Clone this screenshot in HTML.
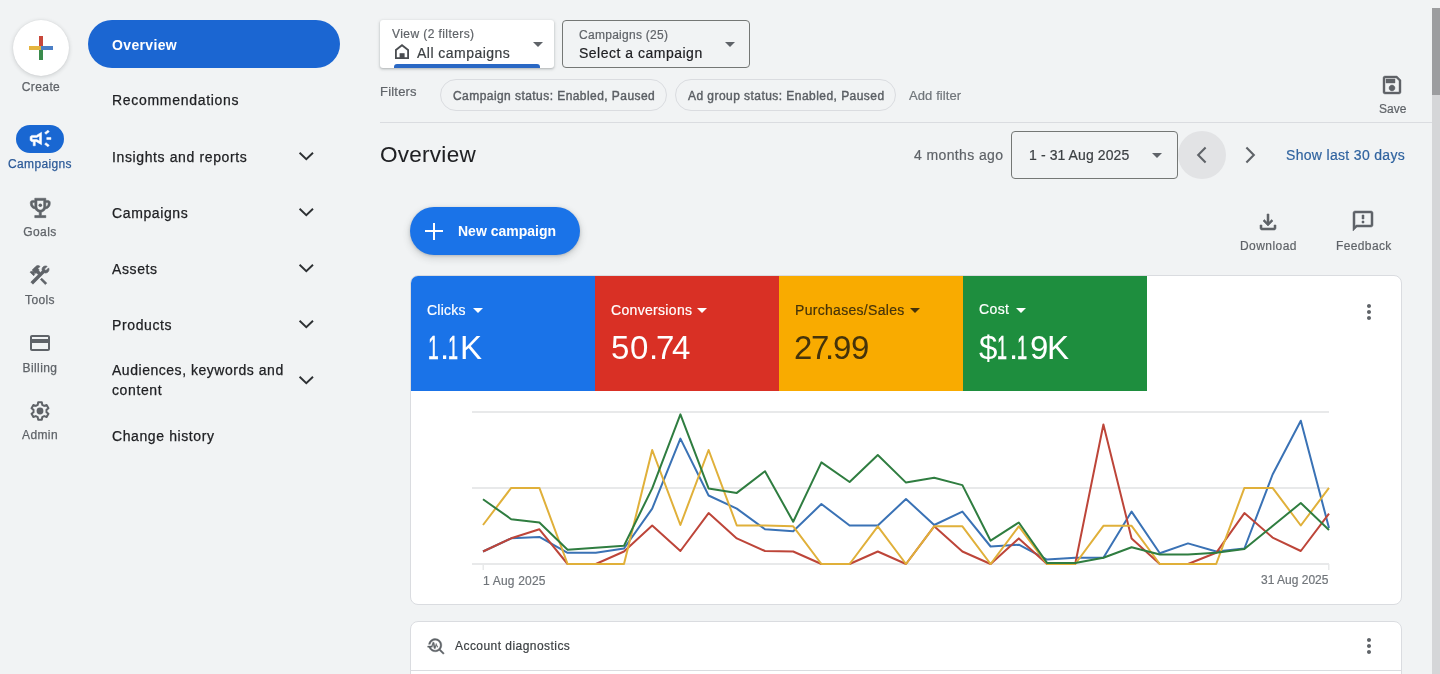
<!DOCTYPE html>
<html><head><meta charset="utf-8">
<style>
*{box-sizing:border-box;margin:0;padding:0}
html,body{width:1440px;height:674px;overflow:hidden;background:#f1f3f4;font-family:"Liberation Sans",sans-serif;color:#202124}
.a{position:absolute}
.t{position:absolute;line-height:1;white-space:nowrap;-webkit-text-stroke:0.2px currentColor;will-change:transform}
svg{display:block}
.rl{font-size:12px;color:#5f6368;width:80px;left:0;text-align:center;-webkit-text-stroke:0.25px currentColor;letter-spacing:0.4px}
.nav{font-size:14px;color:#202124;left:112px;letter-spacing:0.62px;-webkit-text-stroke:0.25px currentColor}
.med{-webkit-text-stroke:0.25px currentColor}
.chev{position:absolute;left:294px;width:24px;height:24px}
</style></head><body>

<!-- LEFT RAIL -->
<div class="a" style="left:13px;top:20px;width:56px;height:56px;border-radius:50%;background:#fff;box-shadow:0 1px 4px rgba(60,64,67,.22),0 0 1px rgba(60,64,67,.1)"></div>
<div class="a" style="left:39px;top:36px;width:4px;height:12px;background:#c8473a"></div>
<div class="a" style="left:39px;top:48px;width:4px;height:12px;background:#3a8b4c"></div>
<div class="a" style="left:29px;top:46px;width:12px;height:4px;background:#e5b43e"></div>
<div class="a" style="left:41px;top:46px;width:12px;height:4px;background:#4b7fc6"></div>
<div class="t rl" style="top:80.5px;left:1px">Create</div>

<div class="a" style="left:16px;top:125px;width:48px;height:28px;border-radius:14px;background:#1967d2"></div>
<svg class="a" style="left:28px;top:126px" width="25" height="25" viewBox="0 0 24 24"><path fill="#fff" stroke="#fff" stroke-width="0.5" d="M18 11v2h4v-2h-4zm-2 6.61c.96.71 2.21 1.65 3.2 2.39.4-.53.8-1.07 1.2-1.6-.99-.74-2.24-1.68-3.2-2.4-.4.54-.8 1.08-1.2 1.61zM20.4 5.6c-.4-.53-.8-1.07-1.2-1.6-.99.74-2.24 1.68-3.2 2.4.4.53.8 1.07 1.2 1.6.96-.72 2.21-1.65 3.2-2.4zM4 9c-1.1 0-2 .9-2 2v2c0 1.1.9 2 2 2h1v4h2v-4h1l5 3V6L8 9H4zm5.03 1.71L11 9.53v4.94l-1.97-1.18-.48-.29H4v-2h4.550l.48-.29z"/></svg>
<div class="t rl med" style="top:157.5px;color:#2c5a98;font-size:12px;letter-spacing:0.35px">Campaigns</div>

<svg class="a" style="left:26.9px;top:194.9px" width="26.6" height="25.9" viewBox="0 0 24 24" preserveAspectRatio="none"><path fill="#5f6368" stroke="#5f6368" stroke-width="0.5" d="M19 5h-2V3H7v2H5c-1.1 0-2 .9-2 2v1c0 2.55 1.920 4.63 4.39 4.94.63 1.5 1.98 2.63 3.61 2.96V19H7v2h10v-2h-4v-3.1c1.63-.33 2.98-1.46 3.61-2.96C19.08 12.63 21 10.55 21 8V7c0-1.1-.9-2-2-2zM5 8V7h2v3.82C5.84 10.4 5 9.3 5 8zm7 6c-1.65 0-3-1.35-3-3V5h6v6c0 1.65-1.35 3-3 3zm7-6c0 1.3-.84 2.4-2 2.82V7h2v1z"/><circle cx="12" cy="9.5" r="1.6" fill="#5f6368"/></svg>
<div class="t rl" style="top:226.3px">Goals</div>

<svg class="a" style="left:28px;top:263px" width="24" height="24" viewBox="0 0 24 24"><path fill="#5f6368" stroke="#5f6368" stroke-width="0.7" d="M13.78 15.17l-1.41 1.41 4.95 4.95 1.41-1.41zm3.72-5.17c1.93 0 3.5-1.57 3.5-3.5 0-.58-.16-1.12-.41-1.6l-2.7 2.7-1.49-1.49 2.7-2.7c-.48-.25-1.02-.41-1.6-.41C15.57 3 14 4.57 14 6.5c0 .41.08.8.21 1.16l-1.85 1.85-1.780-1.78.71-.71-1.41-1.41L12 3.49c-1.17-1.17-3.07-1.17-4.24 0L4.22 7.03l1.41 1.41H2.81l-.71.71 3.54 3.54.71-.71V9.15l1.41 1.41.71-.71 1.78 1.78-7.41 7.41 2.12 2.12L16.34 9.79c.36.13.75.21 1.16.21z"/></svg>
<div class="t rl" style="top:293.5px">Tools</div>

<svg class="a" style="left:28px;top:331px" width="24" height="24" viewBox="0 0 24 24"><path fill="#5f6368" d="M20 4H4c-1.11 0-1.99.89-1.99 2L2 18c0 1.11.89 2 2 2h16c1.11 0 2-.89 2-2V6c0-1.11-.89-2-2-2zm0 14H4v-6h16v6zm0-10H4V6h16v2z"/></svg>
<div class="t rl" style="top:361.8px">Billing</div>

<svg class="a" style="left:28px;top:399px;display:none" width="24" height="24" viewBox="0 0 24 24"><path fill="#5f6368" d="M19.14 12.94c.04-.3.06-.61.06-.94 0-.32-.02-.64-.07-.94l2.03-1.58c.18-.14.23-.41.12-.61l-1.92-3.32c-.12-.22-.37-.29-.59-.22l-2.39.96c-.5-.38-1.03-.7-1.62-.94l-.36-2.54c-.04-.24-.24-.41-.48-.41h-3.84c-.24 0-.43.17-.47.41l-.36 2.54c-.59.24-1.13.57-1.62.94l-2.39-.96c-.22-.08-.47 0-.59.22L2.74 8.87c-.12.21-.08.47.12.61l2.03 1.58c-.05.3-.09.63-.09.94s.02.64.07.94l-2.03 1.58c-.18.14-.23.41-.12.61l1.92 3.32c.12.22.37.29.59.22l2.39-.96c.5.38 1.03.7 1.62.94l.36 2.54c.05.24.24.41.48.41h3.84c.24 0 .44-.17.47-.41l.36-2.54c.59-.24 1.13-.56 1.62-.94l2.39.96c.22.08.47 0 .59-.22l1.92-3.32c.12-.22.07-.47-.12-.61l-2.01-1.58zM12 15.6c-1.98 0-3.6-1.62-3.6-3.6s1.62-3.6 3.6-3.6 3.6 1.62 3.6 3.6-1.62 3.6-3.6 3.6z"/></svg>
<svg class="a" style="left:28px;top:399px" width="24" height="24" viewBox="0 0 24 24"><path fill="none" stroke="#5f6368" stroke-width="2" stroke-linejoin="round" d="M14.26 18.20 L13.85 20.71 L10.15 20.71 L9.74 18.20 L7.76 17.06 L5.39 17.96 L3.54 14.75 L5.50 13.15 L5.50 10.85 L3.54 9.25 L5.39 6.04 L7.76 6.94 L9.74 5.80 L10.15 3.29 L13.85 3.29 L14.26 5.80 L16.24 6.94 L18.61 6.04 L20.46 9.25 L18.50 10.85 L18.50 13.15 L20.46 14.75 L18.61 17.96 L16.24 17.06Z"/><circle cx="12" cy="12" r="3.4" fill="#5f6368"/></svg>
<div class="t rl" style="top:429.2px">Admin</div>

<!-- NAV DRAWER -->
<div class="a" style="left:88px;top:20px;width:252px;height:48px;border-radius:24px;background:#1b66d2"></div>
<div class="t nav" style="top:38.2px;color:#fff;font-weight:bold;letter-spacing:0.35px;-webkit-text-stroke:0">Overview</div>
<div class="t nav" style="top:93.4px;letter-spacing:0.7px">Recommendations</div>
<div class="t nav" style="top:150.2px;letter-spacing:0.62px">Insights and reports</div>
<svg class="chev" style="top:144px" viewBox="0 0 24 24"><path fill="none" stroke="#2d3033" stroke-width="1.9" d="M5.6 8.7L12.3 15.2 19 8.7"/></svg>
<div class="t nav" style="top:205.7px">Campaigns</div>
<svg class="chev" style="top:200px" viewBox="0 0 24 24"><path fill="none" stroke="#2d3033" stroke-width="1.9" d="M5.6 8.7L12.3 15.2 19 8.7"/></svg>
<div class="t nav" style="top:261.7px">Assets</div>
<svg class="chev" style="top:256px" viewBox="0 0 24 24"><path fill="none" stroke="#2d3033" stroke-width="1.9" d="M5.6 8.7L12.3 15.2 19 8.7"/></svg>
<div class="t nav" style="top:317.7px">Products</div>
<svg class="chev" style="top:312px" viewBox="0 0 24 24"><path fill="none" stroke="#2d3033" stroke-width="1.9" d="M5.6 8.7L12.3 15.2 19 8.7"/></svg>
<div class="t nav" style="top:363.4px;letter-spacing:0.53px">Audiences, keywords and</div>
<div class="t nav" style="top:383.1px">content</div>
<svg class="chev" style="top:368px" viewBox="0 0 24 24"><path fill="none" stroke="#2d3033" stroke-width="1.9" d="M5.6 8.7L12.3 15.2 19 8.7"/></svg>
<div class="t nav" style="top:429.4px;letter-spacing:0.6px">Change history</div>

<!-- TOP BAR -->
<div class="a" style="left:380px;top:20px;width:174px;height:48px;background:#fff;border-radius:3px;box-shadow:0 1px 2px rgba(60,64,67,.25),0 1px 3px 1px rgba(60,64,67,.1);overflow:hidden">
  <div class="a" style="left:14px;top:44px;width:146px;height:6px;border-radius:3px 3px 0 0;background:#2a68c4"></div>
</div>
<div class="t" style="left:392px;top:28.2px;font-size:12px;color:#5f6368;letter-spacing:0.42px">View (2 filters)</div>
<svg class="a" style="left:395px;top:44px" width="14" height="15" viewBox="0 0 14 15"><path fill="none" stroke="#4a4d51" stroke-width="1.8" d="M0.9 14.1V6L7 1.2 13.1 6v8.1z"/><rect x="4.6" y="9.2" width="5" height="5" fill="#4a4d51"/></svg>
<div class="t" style="left:417px;top:46.2px;font-size:14px;color:#3c4043;letter-spacing:0.47px">All campaigns</div>
<div class="a" style="left:533px;top:42px;width:0;height:0;border-left:5px solid transparent;border-right:5px solid transparent;border-top:5px solid #5f6368"></div>

<div class="a" style="left:562px;top:20px;width:188px;height:48px;border:1px solid #747775;border-radius:4px"></div>
<div class="t" style="left:579px;top:29.2px;font-size:12px;color:#5f6368;letter-spacing:0.28px">Campaigns (25)</div>
<div class="t" style="left:578.5px;top:45.8px;font-size:14px;color:#202124;letter-spacing:0.5px">Select a campaign</div>
<div class="a" style="left:725px;top:42px;width:0;height:0;border-left:5px solid transparent;border-right:5px solid transparent;border-top:5px solid #5f6368"></div>

<div class="t" style="left:380px;top:84.7px;font-size:13px;color:#5f6368;letter-spacing:0.2px">Filters</div>
<div class="a" style="left:440px;top:79px;width:227px;height:32px;border:1px solid #dadce0;border-radius:16px"></div>
<div class="t" style="left:453px;top:90.2px;font-size:12px;color:#5a5e63;letter-spacing:0.44px;-webkit-text-stroke:0.4px currentColor">Campaign status: Enabled, Paused</div>
<div class="a" style="left:675px;top:79px;width:221px;height:32px;border:1px solid #dadce0;border-radius:16px"></div>
<div class="t" style="left:688px;top:90.2px;font-size:12px;color:#5a5e63;letter-spacing:0.45px;-webkit-text-stroke:0.4px currentColor">Ad group status: Enabled, Paused</div>
<div class="t" style="left:909px;top:89.4px;font-size:13px;color:#70757a;letter-spacing:0.1px">Add filter</div>

<svg class="a" style="left:1380px;top:73px" width="24" height="24" viewBox="0 0 24 24"><path fill="#5f6368" stroke="#5f6368" stroke-width="0.4" d="M17 3H5c-1.11 0-2 .9-2 2v14c0 1.1.89 2 2 2h14c1.1 0 2-.89 2-2V7l-4-4zm2 16H5V5h11.17L19 7.83V19zm-7-7c-1.66 0-3 1.34-3 3s1.34 3 3 3 3-1.34 3-3-1.34-3-3-3zM6 6h9v4H6z"/></svg>
<div class="t" style="left:1378.5px;top:103px;font-size:12px;color:#5f6368">Save</div>
<div class="a" style="left:380px;top:122px;width:1052px;height:1px;background:#dadce0"></div>

<!-- scrollbar -->
<div class="a" style="left:1432px;top:8px;width:8px;height:666px;background:#d5d6d8"></div>
<div class="a" style="left:1432px;top:8px;width:8px;height:87px;background:#9c9d9f"></div>

<!-- HEADER ROW -->
<div class="t" style="left:380px;top:144px;font-size:22.5px;color:#202124;letter-spacing:0.27px;-webkit-text-stroke:0.05px currentColor">Overview</div>
<div class="t" style="left:913.5px;top:147.8px;font-size:14px;color:#5f6368;letter-spacing:0.38px">4 months ago</div>
<div class="a" style="left:1011px;top:131px;width:167px;height:48px;border:1px solid #747775;border-radius:4px"></div>
<div class="t" style="left:1028.5px;top:148px;font-size:14px;color:#3c4043;letter-spacing:0.1px">1 - 31 Aug 2025</div>
<div class="a" style="left:1152px;top:153px;width:0;height:0;border-left:5px solid transparent;border-right:5px solid transparent;border-top:5px solid #5f6368"></div>
<div class="a" style="left:1178px;top:131px;width:48px;height:48px;border-radius:50%;background:#e2e3e5"></div>
<svg class="a" style="left:1190px;top:143px" width="24" height="24" viewBox="0 0 24 24"><path fill="none" stroke="#5f6368" stroke-width="2.1" d="M15.6 4.6L8.2 12l7.4 7.4"/></svg>
<svg class="a" style="left:1238px;top:143px" width="24" height="24" viewBox="0 0 24 24"><path fill="none" stroke="#5f6368" stroke-width="2.1" d="M8.4 4.6L15.8 12l-7.4 7.4"/></svg>
<div class="t" style="left:1286px;top:148.3px;font-size:14px;color:#30639f;letter-spacing:0.32px">Show last 30 days</div>

<!-- New campaign -->
<div class="a" style="left:410px;top:207px;width:170px;height:48px;border-radius:24px;background:#1a73e8;box-shadow:0 1px 3px rgba(60,64,67,.25),0 3px 6px 2px rgba(60,64,67,.12)"></div>
<div class="a" style="left:425px;top:230px;width:18px;height:2.4px;background:#fff"></div>
<div class="a" style="left:432.8px;top:222.5px;width:2.4px;height:17px;background:#fff"></div>
<div class="t" style="left:458px;top:224.4px;font-size:14px;color:#fff;font-weight:bold;-webkit-text-stroke:0">New campaign</div>

<svg class="a" style="left:1256px;top:210px" width="24" height="24" viewBox="0 -960 960 960"><path fill="#5f6368" stroke="#5f6368" stroke-width="22" d="M480-320 280-520l56-58 104 104v-326h80v326l104-104 56 58-200 200ZM240-160q-33 0-56.5-23.5T160-240v-120h80v120h480v-120h80v120q0 33-23.5 56.5T720-160H240Z"/></svg>
<div class="t" style="left:1239.5px;top:239.5px;font-size:12px;color:#5f6368;letter-spacing:0.44px">Download</div>
<svg class="a" style="left:1351px;top:209px" width="24" height="24" viewBox="0 0 24 24"><path fill="#5f6368" stroke="#5f6368" stroke-width="0.5" d="M20 2H4c-1.1 0-1.99.9-1.99 2L2 22l4-4h14c1.1 0 2-.9 2-2V4c0-1.1-.9-2-2-2zm0 14H5.17l-.59.59-.58.58V4h16v12zm-9-4h2v2h-2zm0-6h2v4h-2z"/></svg>
<div class="t" style="left:1336px;top:239.5px;font-size:12px;color:#5f6368;letter-spacing:0.38px">Feedback</div>

<!-- CHART CARD -->
<div class="a" style="left:410px;top:275px;width:992px;height:330px;background:#fff;border:1px solid #dadce0;border-radius:8px;overflow:hidden">
  <div class="a" style="left:0;top:0;width:184px;height:115px;background:#1a73e8"></div>
  <div class="a" style="left:184px;top:0;width:184px;height:115px;background:#d93025"></div>
  <div class="a" style="left:368px;top:0;width:184px;height:115px;background:#f9ab00"></div>
  <div class="a" style="left:552px;top:0;width:184px;height:115px;background:#1e8e3e"></div>
</div>
<div class="t" style="left:427px;top:302.5px;font-size:14px;color:#fff;letter-spacing:0.25px">Clicks</div>
<div class="a" style="left:473px;top:308px;width:0;height:0;border-left:5px solid transparent;border-right:5px solid transparent;border-top:5px solid #fff"></div>
<span class="t" style="left:427.5px;top:331px;font-size:33px;color:#fff;transform:scaleX(0.580);transform-origin:0 0;-webkit-text-stroke:0.6px currentColor">1</span><span class="t" style="left:440.2px;top:331px;font-size:33px;-webkit-text-stroke:0;color:#fff">.</span><span class="t" style="left:447.6px;top:331px;font-size:33px;color:#fff;transform:scaleX(0.553);transform-origin:0 0;-webkit-text-stroke:0.6px currentColor">1</span><span class="t" style="left:459.8px;top:331px;font-size:33px;-webkit-text-stroke:0;color:#fff">K</span>

<div class="t" style="left:611px;top:302.8px;font-size:14px;color:#fff;letter-spacing:0.32px">Conversions</div>
<div class="a" style="left:697px;top:308px;width:0;height:0;border-left:5px solid transparent;border-right:5px solid transparent;border-top:5px solid #fff"></div>
<span class="t" style="left:610.6px;top:331px;font-size:33px;-webkit-text-stroke:0;color:#fff">5</span><span class="t" style="left:629.8px;top:331px;font-size:33px;-webkit-text-stroke:0;color:#fff">0</span><span class="t" style="left:648.8px;top:331px;font-size:33px;-webkit-text-stroke:0;color:#fff">.</span><span class="t" style="left:656.1px;top:331px;font-size:33px;-webkit-text-stroke:0;color:#fff">7</span><span class="t" style="left:672.0px;top:331px;font-size:33px;-webkit-text-stroke:0;color:#fff">4</span>

<div class="t" style="left:795px;top:303.2px;font-size:14px;color:#45330a;letter-spacing:0.3px">Purchases/Sales</div>
<div class="a" style="left:910px;top:308px;width:0;height:0;border-left:5px solid transparent;border-right:5px solid transparent;border-top:5px solid #45330a"></div>
<span class="t" style="left:793.7px;top:331px;font-size:33px;-webkit-text-stroke:0;color:#45330a">2</span><span class="t" style="left:811.0px;top:331px;font-size:33px;-webkit-text-stroke:0;color:#45330a">7</span><span class="t" style="left:824.6px;top:331px;font-size:33px;-webkit-text-stroke:0;color:#45330a">.</span><span class="t" style="left:832.5px;top:331px;font-size:33px;-webkit-text-stroke:0;color:#45330a">9</span><span class="t" style="left:850.5px;top:331px;font-size:33px;-webkit-text-stroke:0;color:#45330a">9</span>

<div class="t" style="left:979px;top:302.4px;font-size:14px;color:#fff;letter-spacing:0.37px">Cost</div>
<div class="a" style="left:1016px;top:308px;width:0;height:0;border-left:5px solid transparent;border-right:5px solid transparent;border-top:5px solid #fff"></div>
<span class="t" style="left:978.5px;top:331px;font-size:33px;-webkit-text-stroke:0;color:#fff">$</span><span class="t" style="left:997.2px;top:331px;font-size:33px;color:#fff;transform:scaleX(0.553);transform-origin:0 0;-webkit-text-stroke:0.6px currentColor">1</span><span class="t" style="left:1009.4px;top:331px;font-size:33px;-webkit-text-stroke:0;color:#fff">.</span><span class="t" style="left:1016.9px;top:331px;font-size:33px;color:#fff;transform:scaleX(0.560);transform-origin:0 0;-webkit-text-stroke:0.6px currentColor">1</span><span class="t" style="left:1030.1px;top:331px;font-size:33px;-webkit-text-stroke:0;color:#fff">9</span><span class="t" style="left:1047.0px;top:331px;font-size:33px;-webkit-text-stroke:0;color:#fff">K</span>

<svg class="a" style="left:1357px;top:300px" width="24" height="24" viewBox="0 0 24 24"><path fill="#5f6368" d="M12 8c1.1 0 2-.9 2-2s-.9-2-2-2-2 .9-2 2 .9 2 2 2zm0 2c-1.1 0-2 .9-2 2s.9 2 2 2 2-.9 2-2-.9-2-2-2zm0 6c-1.1 0-2 .9-2 2s.9 2 2 2 2-.9 2-2-.9-2-2-2z"/></svg>

<svg class="a" id="chart" style="left:0;top:0" width="1440" height="674">
  <g fill="#e8e9ea">
    <rect x="472" y="411" width="857" height="2"/>
    <rect x="472" y="487" width="857" height="2"/>
    <rect x="472" y="563" width="857" height="2"/>
    <rect x="482.5" y="564" width="1.5" height="6"/>
    <rect x="1328" y="564" width="1.5" height="6"/>
  </g>
  <g fill="none" stroke-width="2" stroke-linejoin="round">
    <polyline id="pb" points="483.0,551.5 511.2,538.3 539.4,536.9 567.6,552.8 595.8,552.8 624.0,548.5 652.2,508.6 680.4,438.6 708.6,495.5 736.8,508.6 765.0,529.3 793.2,531.3 821.4,504 849.6,525.5 877.8,525.5 906.0,499 934.2,525 962.4,511.6 990.6,546.5 1018.8,544.7 1047.0,559.6 1075.2,557.8 1103.4,557.8 1131.6,511.6 1159.8,553.3 1188.0,543.4 1216.2,551.5 1244.4,548.5 1272.6,474.5 1300.8,420.7 1329.0,528" stroke="#3a72b5"/>
    <polyline id="pr" points="483.0,551.5 511.2,538.3 539.4,529.3 567.6,564 595.8,564 624.0,551.5 652.2,525.5 680.4,551 708.6,513.1 736.8,538.4 765.0,551 793.2,551.5 821.4,564 849.6,564 877.8,551.5 906.0,564 934.2,526.3 962.4,551.5 990.6,564 1018.8,538.4 1047.0,564 1075.2,564 1103.4,424.5 1131.6,538.4 1159.8,564 1188.0,564 1216.2,552.8 1244.4,513.1 1272.6,537.6 1300.8,551 1329.0,513.6" stroke="#bd4539"/>
    <polyline id="py" points="483.0,525 511.2,487.9 539.4,487.9 567.6,564 595.8,564 624.0,564 652.2,450 680.4,525 708.6,450 736.8,525.5 765.0,525.5 793.2,526.3 821.4,564 849.6,564 877.8,526.3 906.0,564 934.2,526.3 962.4,526.3 990.6,564 1018.8,526.3 1047.0,564 1075.2,564 1103.4,525.8 1131.6,525.8 1159.8,564 1188.0,564 1216.2,564 1244.4,487.9 1272.6,487.9 1300.8,525.5 1329.0,487.9" stroke="#e0b03a"/>
    <polyline id="pg" points="483.0,499.2 511.2,519.2 539.4,522.5 567.6,549.7 595.8,547.7 624.0,545.7 652.2,488.4 680.4,414.4 708.6,488.4 736.8,492.9 765.0,471.2 793.2,521.7 821.4,462.4 849.6,482 877.8,455 906.0,482.6 934.2,477.8 962.4,485.1 990.6,540.7 1018.8,522.5 1047.0,562.9 1075.2,562.9 1103.4,557.8 1131.6,547.2 1159.8,554.5 1188.0,554.5 1216.2,552.8 1244.4,549 1272.6,526 1300.8,503 1329.0,530" stroke="#2f7d40"/>
  </g>
</svg>
<div class="t" style="left:483px;top:574.5px;font-size:12px;color:#70757a;letter-spacing:0.2px">1 Aug 2025</div>
<div class="t" style="left:1261px;top:574.2px;font-size:12px;color:#70757a">31 Aug 2025</div>

<!-- DIAGNOSTICS CARD -->
<div class="a" style="left:410px;top:621px;width:992px;height:80px;background:#fff;border:1px solid #dadce0;border-radius:8px"></div>
<div class="a" style="left:411px;top:670px;width:990px;height:1px;background:#dadce0"></div>
<svg class="a" style="left:426px;top:636px" width="20" height="20" viewBox="0 0 24 24"><path fill="#5f6368" stroke="#5f6368" stroke-width="0.4" d="M22 20.59l-4.69-4.69C18.37 14.55 19 12.85 19 11c0-4.42-3.58-8-8-8-4.08 0-7.44 3.05-7.93 7h2.02C5.57 7.17 8.03 5 11 5c3.31 0 6 2.69 6 6s-2.69 6-6 6c-2.42 0-4.5-1.44-5.45-3.5H3.4C4.45 16.69 7.46 19 11 19c1.85 0 3.55-.63 4.9-1.690L20.59 22 22 20.590zM8.43 9.69L9.65 15h1.64l1.26-3.78.95 2.28h.5v-1.5h-.5l-1.34-3.22L10.94 13h-.03L9.64 7.5H8.19L6.61 12H2v1.5h5.55z"/></svg>
<div class="t" style="left:455px;top:640.2px;font-size:12px;color:#3c4043;letter-spacing:0.45px">Account diagnostics</div>
<svg class="a" style="left:1357px;top:634px" width="24" height="24" viewBox="0 0 24 24"><path fill="#5f6368" d="M12 8c1.1 0 2-.9 2-2s-.9-2-2-2-2 .9-2 2 .9 2 2 2zm0 2c-1.1 0-2 .9-2 2s.9 2 2 2 2-.9 2-2-.9-2-2-2zm0 6c-1.1 0-2 .9-2 2s.9 2 2 2 2-.9 2-2-.9-2-2-2z"/></svg>

</body></html>
